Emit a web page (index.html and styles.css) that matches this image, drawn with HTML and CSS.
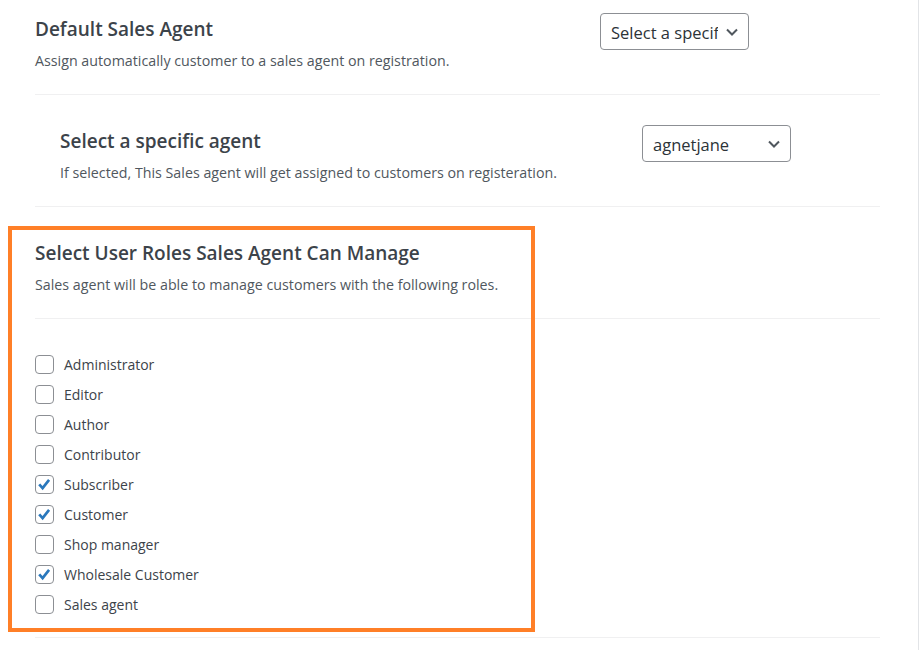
FILE: index.html
```html
<!DOCTYPE html>
<html>
<head>
    <meta charset="UTF-8">
    <link rel="stylesheet" href="styles.css">
</head>

<body>
    <div class="page">
        <div class="setting first">
            <div class="info">
                <h2>Default Sales Agent</h2>
                <p>Assign automatically customer to a sales agent on registration.</p>
            </div>
            <div class="select-wrap">
                <select>
                    <option>Select a specific agent</option>
                </select>
                <svg class="chevron" viewBox="0 0 12 8"><path d="M1 1.5l5 5 5-5" /></svg>
            </div>
        </div>

        <div class="setting sub">
            <div class="info">
                <h2>Select a specific agent</h2>
                <p>If selected, This Sales agent will get assigned to customers on registeration.</p>
            </div>
            <div class="select-wrap">
                <select>
                    <option>agnetjane</option>
                </select>
                <svg class="chevron" viewBox="0 0 12 8"><path d="M1 1.5l5 5 5-5" /></svg>
            </div>
        </div>

        <div class="roles-block">
            <div class="setting">
                <div class="info">
                    <h2>Select User Roles Sales Agent Can Manage</h2>
                    <p>Sales agent will be able to manage customers with the following roles.</p>
                </div>
            </div>

            <div class="roles">
                <label class="role"><span class="box"></span>Administrator</label>
                <label class="role"><span class="box"></span>Editor</label>
                <label class="role"><span class="box"></span>Author</label>
                <label class="role"><span class="box"></span>Contributor</label>
                <label class="role"><span class="box checked"><svg viewBox="0 0 19 19"><path d="M3.6 9.3l3.8 4.3 7.2-9.2" /></svg></span>Subscriber</label>
                <label class="role"><span class="box checked"><svg viewBox="0 0 19 19"><path d="M3.6 9.3l3.8 4.3 7.2-9.2" /></svg></span>Customer</label>
                <label class="role"><span class="box"></span>Shop manager</label>
                <label class="role"><span class="box checked"><svg viewBox="0 0 19 19"><path d="M3.6 9.3l3.8 4.3 7.2-9.2" /></svg></span>Wholesale Customer</label>
                <label class="role"><span class="box"></span>Sales agent</label>
            </div>

            <!-- annotation frame drawn over the roles section -->
            <div class="highlight"></div>
        </div>
    </div>
</body>
</html>
```

FILE: styles.css
```css
body {
    margin: 0;
    background: #fff;
    font-family: "Open Sans", "Noto Sans", sans-serif;
    color: #3c434a;
}

.page {
    box-sizing: border-box;
    width: 919px;
    min-height: 650px;
    padding: 0 38px 0 35px;
    border-right: 1px solid #e2e4e7;
}

.setting {
    display: flex;
    align-items: flex-start;
    padding: 33px 0 23px;
    border-bottom: 1px solid #f0f0f1;
}

.setting.first {
    padding-top: 16px;
}

.setting .info {
    width: 565px;
}

.setting.sub {
    padding-left: 25px;
}

.setting.sub .info {
    width: 582px;
}

.setting h2 {
    margin: 0;
    font-size: 19px;
    line-height: 26px;
    font-weight: 600;
    color: #3c434a;
}

.setting p {
    margin: 9px 0 0;
    font-size: 14.25px;
    line-height: 20px;
    color: #50575e;
}

.select-wrap {
    position: relative;
    margin-top: -3px;
}

.select-wrap select {
    -webkit-appearance: none;
    appearance: none;
    box-sizing: border-box;
    width: 149px;
    height: 37px;
    padding: 1px 30px 0 10px;
    border: 1px solid #8c8f94;
    border-radius: 4px;
    background: #fff;
    font-family: inherit;
    font-size: 16.5px;
    color: #2c3338;
}

.select-wrap .chevron {
    position: absolute;
    right: 11px;
    top: 15px;
    width: 12px;
    height: 8px;
    fill: none;
    stroke: #50575e;
    stroke-width: 2;
    pointer-events: none;
}

.roles-block {
    position: relative;
}

.roles {
    padding: 30px 0 18px;
    border-bottom: 1px solid #f0f0f1;
}

.role {
    display: flex;
    align-items: center;
    height: 30px;
    font-size: 14px;
    color: #3c434a;
}

.box {
    box-sizing: border-box;
    width: 19px;
    height: 19px;
    margin-right: 10px;
    border: 1px solid #8c8f94;
    border-radius: 4px;
    background: #fff;
}

.box svg {
    display: block;
    width: 17px;
    height: 17px;
    fill: none;
    stroke: #2a78bd;
    stroke-width: 3;
}

.highlight {
    position: absolute;
    left: -27px;
    top: 19px;
    box-sizing: border-box;
    width: 527px;
    height: 406px;
    border: 4px solid #ff7f27;
    pointer-events: none;
}
```
